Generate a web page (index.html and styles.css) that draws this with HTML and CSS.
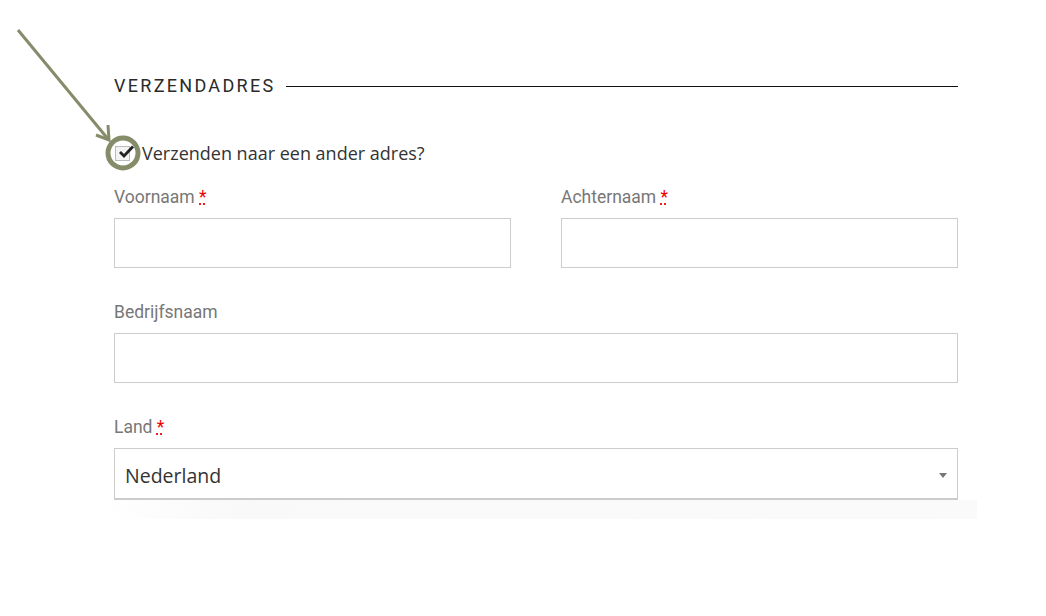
FILE: index.html
```html
<!DOCTYPE html>
<html lang="nl">
<head>
    <meta charset="UTF-8">
    <title>Verzendadres</title>
    <link rel="stylesheet" href="styles.css">
</head>
<body>
    <div class="checkout">
        <h3 class="section-title"><span>Verzendadres</span></h3>

        <label class="ship-toggle">
            <span class="check">
                <svg width="18" height="18" viewBox="0 0 18 18"><path d="M3 9 L7 13 L16 3.5" fill="none" stroke="#222" stroke-width="2.8"/></svg>
            </span>
            Verzenden naar een ander adres?
        </label>

        <div class="row">
            <div class="field">
                <label>Voornaam <abbr title="verplicht">*</abbr></label>
                <input type="text">
            </div>
            <div class="field">
                <label>Achternaam <abbr title="verplicht">*</abbr></label>
                <input type="text">
            </div>
        </div>

        <div class="field">
            <label>Bedrijfsnaam</label>
            <input type="text">
        </div>

        <div class="field">
            <label>Land <abbr title="verplicht">*</abbr></label>
            <div class="select">
                <span>Nederland</span>
                <i class="caret"></i>
            </div>
        </div>
        <div class="fade"></div>
    </div>

    <!-- annotation -->
    <svg class="pointer" width="160" height="200" viewBox="0 0 160 200">
        <line x1="18" y1="30" x2="108" y2="139" stroke="#858c6a" stroke-width="3"/>
        <path d="M96 135 L109 140 L108 125" fill="none" stroke="#858c6a" stroke-width="3"/>
        <circle cx="123" cy="153" r="15" fill="none" stroke="#858c6a" stroke-width="5"/>
    </svg>
</body>
</html>
```

FILE: styles.css
```css
body {
    margin: 0;
    background: #fff;
    font-family: 'Open Sans', sans-serif;
    color: #333;
}
.checkout {
    width: 844px;
    padding: 74px 0 0 114px;
}
.section-title {
    display: flex;
    align-items: center;
    gap: 11px;
    margin: 0;
    font-family: Roboto, sans-serif;
    font-weight: 400;
    font-size: 18px;
    letter-spacing: 2.3px;
    text-transform: uppercase;
    color: #2a2a2a;
    line-height: 24px;
}
.section-title::after {
    content: "";
    flex: 1;
    height: 1px;
    background: #111;
}
.ship-toggle {
    display: flex;
    align-items: center;
    gap: 12px;
    margin: 44px 0 0 1px;
    font-size: 18px;
    line-height: 22px;
    color: #333;
}
.check {
    width: 13px;
    height: 13px;
    border: 1px solid #bbb;
    background: #f3f3f3;
    position: relative;
}
.check svg {
    position: absolute;
    left: 1px;
    top: -4px;
}
.row {
    display: flex;
    gap: 50px;
}
.row .field {
    flex: 1;
}
.field {
    display: flex;
    flex-direction: column;
    margin-top: 33px;
}
.row .field {
    margin-top: 22px;
}
.field label {
    font-family: Roboto, sans-serif;
    font-size: 17.5px;
    color: #777;
    line-height: 22px;
    margin: 0 0 10px;
}
abbr {
    color: #e00;
    text-decoration: underline dotted;
    cursor: help;
}
.field input {
    box-sizing: border-box;
    height: 50px;
    border: 1px solid #ccc;
    margin: 0;
    padding: 0;
    font-size: 16px;
}
.select {
    box-sizing: border-box;
    height: 52px;
    display: flex;
    align-items: center;
    justify-content: space-between;
    border: 1px solid #ccc;
    border-bottom-width: 2px;
    padding: 4px 10px 0;
    font-size: 19.5px;
    color: #333;
}
.caret {
    width: 0;
    height: 0;
    border-left: 4px solid transparent;
    border-right: 4px solid transparent;
    border-top: 5px solid #777;
}
.fade {
    height: 19px;
    margin: 0 -19px 0 -14px;
    background: linear-gradient(to right, #fff 0%, #f9f9f9 15%, #fafafa 100%);
}
.pointer {
    position: absolute;
    left: 0;
    top: 0;
    pointer-events: none;
}
```
